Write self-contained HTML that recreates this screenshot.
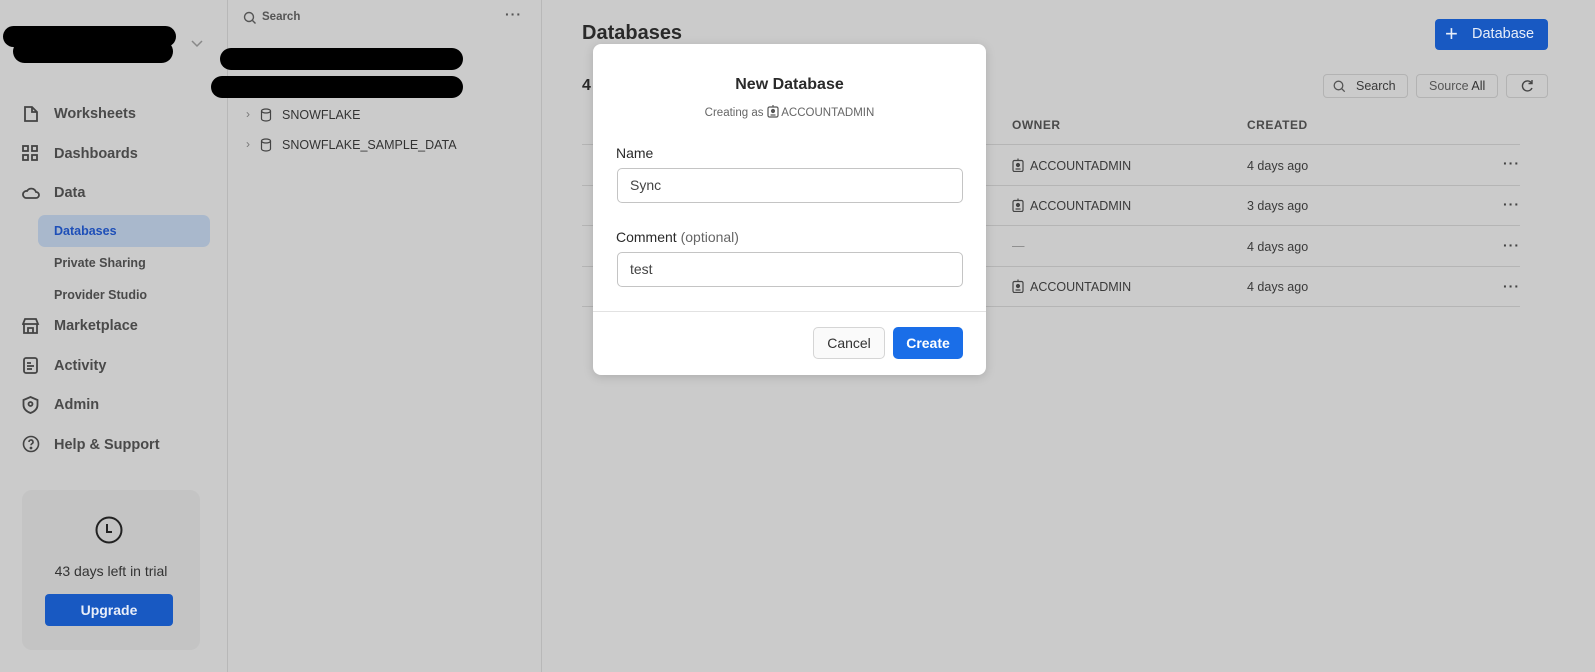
<!DOCTYPE html>
<html><head><meta charset="utf-8"><style>
*{box-sizing:border-box;margin:0;padding:0}
body{width:1595px;height:672px;background:#cbcbcb;font-family:"Liberation Sans",sans-serif;position:relative;overflow:hidden;color:#3a3a3a}
.a{position:absolute}
.blk{position:absolute;background:#000;border-radius:12px}
.nav{position:absolute;left:54px;font-size:14.5px;font-weight:bold;color:#4a4a4a}
.sub{position:absolute;left:54px;font-size:12.5px;font-weight:bold;color:#4a4a4a}
.ic{position:absolute;left:22px}
.row{position:absolute;left:582px;width:938px;border-top:1px solid #b5b5b5}
.cell{position:absolute;font-size:12.5px;color:#3a3a3a}
.cell svg{vertical-align:-2px;margin-right:6px}
.dots{position:absolute;left:1503px;font-size:14px;letter-spacing:1px;font-weight:bold;color:#444}
.btn{position:absolute;border:1px solid #b3b3b3;border-radius:4px;font-size:12.5px;color:#3a3a3a;height:24px;line-height:22px}
</style></head><body>
<div class="a" style="left:227px;top:0;width:1px;height:672px;background:#b8b8b8"></div>
<div class="a" style="left:541px;top:0;width:1px;height:672px;background:#b8b8b8"></div>
<div class="blk" style="left:3px;top:26px;width:173px;height:21px"></div>
<div class="blk" style="left:13px;top:40px;width:160px;height:23px"></div>
<svg class="a" style="left:190px;top:39px" width="14" height="10"><path d="M2 2l5 5 5-5" stroke="#888" stroke-width="1.5" fill="none"/></svg>

<svg class="ic" style="top:105px" width="18" height="18" fill="none" stroke="#444" stroke-width="1.8"><path d="M3 2h7l5 5v9H3z M10 2v5h5"/></svg>
<div class="nav" style="top:106px">Worksheets</div>
<svg class="ic" style="top:145px" width="18" height="18" fill="none" stroke="#444" stroke-width="1.8"><rect x="1" y="1" width="5" height="5"/><rect x="10" y="1" width="5" height="5"/><rect x="1" y="10" width="5" height="5"/><rect x="10" y="10" width="5" height="5"/></svg>
<div class="nav" style="top:146px">Dashboards</div>
<svg class="ic" style="top:186px" width="18" height="14" fill="none" stroke="#444" stroke-width="1.8"><path d="M4 12h10a3 3 0 0 0 0-6 5 5 0 0 0-9-1 3.5 3.5 0 0 0-1 7z"/></svg>
<div class="nav" style="top:185px">Data</div>
<div class="a" style="left:38px;top:215px;width:172px;height:32px;background:#a9b8cc;border-radius:7px"></div>
<div class="sub" style="top:224px;color:#1e4fb8">Databases</div>
<div class="sub" style="top:256px">Private Sharing</div>
<div class="sub" style="top:288px">Provider Studio</div>
<svg class="ic" style="top:317px" width="18" height="18" fill="none" stroke="#444" stroke-width="1.8"><path d="M3 2h11l2 5H1z M2 7v9h13V7 M6 16v-5h5v5"/></svg>
<div class="nav" style="top:318px">Marketplace</div>
<svg class="ic" style="top:357px" width="18" height="18" fill="none" stroke="#444" stroke-width="1.8"><rect x="2" y="1" width="13" height="15" rx="2"/><path d="M5 6h4M5 9h7M5 12h5"/></svg>
<div class="nav" style="top:358px">Activity</div>
<svg class="ic" style="top:396px" width="18" height="18" fill="none" stroke="#444" stroke-width="1.8"><path d="M8.5 1l7 3v5c0 4-3 6.5-7 8-4-1.5-7-4-7-8V4z"/><circle cx="8.5" cy="8" r="2"/></svg>
<div class="nav" style="top:397px">Admin</div>
<svg class="ic" style="top:435px" width="18" height="18" fill="none" stroke="#444" stroke-width="1.6"><circle cx="9" cy="9" r="7.5"/><path d="M7 7a2 2 0 1 1 3 1.7c-.7.4-1 .8-1 1.6"/><circle cx="9" cy="13" r=".6" fill="#444"/></svg>
<div class="nav" style="top:437px">Help &amp; Support</div>

<div class="a" style="left:22px;top:490px;width:178px;height:160px;background:#c4c4c4;border-radius:10px"></div>
<svg class="a" style="left:95px;top:516px" width="28" height="28" fill="none" stroke="#222" stroke-width="2"><circle cx="14" cy="14" r="12.5"/><path d="M12 8v8h5"/></svg>
<div class="a" style="left:22px;top:563px;width:178px;text-align:center;font-size:14px;color:#333">43 days left in trial</div>
<div class="a" style="left:45px;top:594px;width:128px;height:32px;background:#1859c2;border-radius:4px;color:#e8eef9;font-weight:bold;font-size:14px;text-align:center;line-height:32px">Upgrade</div>

<svg class="a" style="left:243px;top:11px" width="14" height="14" fill="none" stroke="#555" stroke-width="1.4"><circle cx="6" cy="6" r="4.5"/><path d="M9.5 9.5l3 3"/></svg>
<div class="a" style="left:262px;top:11px;font-size:11.5px;font-weight:bold;color:#555">Search</div>
<div class="a" style="left:505px;top:6px;font-size:14px;font-weight:bold;color:#555;letter-spacing:1px">···</div>
<div class="blk" style="left:220px;top:48px;width:243px;height:22px"></div>
<div class="blk" style="left:211px;top:76px;width:252px;height:22px"></div>
<div class="a" style="left:246px;top:107px;font-size:12px;color:#777">›</div>
<svg class="a" style="left:260px;top:108px" width="12" height="14" fill="none" stroke="#444" stroke-width="1.2"><ellipse cx="6" cy="3" rx="4.5" ry="2"/><path d="M1.5 3v8c0 1 2 2 4.5 2s4.5-1 4.5-2V3"/></svg>
<div class="a" style="left:282px;top:108px;font-size:12.5px;color:#333">SNOWFLAKE</div>
<div class="a" style="left:246px;top:137px;font-size:12px;color:#777">›</div>
<svg class="a" style="left:260px;top:138px" width="12" height="14" fill="none" stroke="#444" stroke-width="1.2"><ellipse cx="6" cy="3" rx="4.5" ry="2"/><path d="M1.5 3v8c0 1 2 2 4.5 2s4.5-1 4.5-2V3"/></svg>
<div class="a" style="left:282px;top:138px;font-size:12.5px;color:#333">SNOWFLAKE_SAMPLE_DATA</div>

<div class="a" style="left:582px;top:22px;font-size:20px;font-weight:bold;color:#2a2a2a">Databases</div>
<div class="a" style="left:582px;top:77px;font-size:16px;font-weight:bold;color:#2a2a2a">4</div>
<div class="a" style="left:1435px;top:19px;width:113px;height:31px;background:#1859c2;border-radius:4px;color:#e8eef9;font-size:14.5px;line-height:31px"><span style="position:absolute;left:10px;top:-1px;font-size:22px">+</span><span style="position:absolute;left:37px">Database</span></div>
<div class="btn" style="left:1323px;top:74px;width:85px"><svg class="a" style="left:9px;top:5px" width="13" height="13" fill="none" stroke="#555" stroke-width="1.3"><circle cx="5.5" cy="5.5" r="4.3"/><path d="M8.7 8.7l3 3"/></svg><span style="position:absolute;left:32px">Search</span></div>
<div class="btn" style="left:1416px;top:74px;width:82px;padding-left:12px;color:#555">Source <b style="color:#333;font-weight:normal">All</b></div>
<div class="btn" style="left:1506px;top:74px;width:42px"><svg class="a" style="left:13px;top:4px" width="14" height="14" fill="none" stroke="#444" stroke-width="1.4"><path d="M11.5 4A5 5 0 1 0 12 9 M12 1v3.5H8.5"/></svg></div>
<div class="cell" style="left:1012px;top:118px;font-weight:bold;color:#4a4a4a;letter-spacing:.5px;font-size:12px">OWNER</div>
<div class="cell" style="left:1247px;top:118px;font-weight:bold;color:#4a4a4a;letter-spacing:.5px;font-size:12px">CREATED</div>
<div class="row" style="top:144px"></div><div class="row" style="top:185px"></div><div class="row" style="top:225px"></div><div class="row" style="top:266px"></div><div class="row" style="top:306px"></div>

<div class="cell" style="left:1012px;top:158px"><svg width="12" height="14" fill="none" stroke="#444" stroke-width="1.2"><rect x="1" y="2.5" width="10" height="11" rx="1.5"/><circle cx="6" cy="7" r="1.5" fill="#444"/><path d="M3.5 11h5M6 0.5v2"/></svg>ACCOUNTADMIN</div><div class="cell" style="left:1247px;top:159px">4 days ago</div><div class="dots" style="top:155px">···</div>
<div class="cell" style="left:1012px;top:198px"><svg width="12" height="14" fill="none" stroke="#444" stroke-width="1.2"><rect x="1" y="2.5" width="10" height="11" rx="1.5"/><circle cx="6" cy="7" r="1.5" fill="#444"/><path d="M3.5 11h5M6 0.5v2"/></svg>ACCOUNTADMIN</div><div class="cell" style="left:1247px;top:199px">3 days ago</div><div class="dots" style="top:196px">···</div>
<div class="cell" style="left:1012px;top:239px;color:#888">—</div><div class="cell" style="left:1247px;top:240px">4 days ago</div><div class="dots" style="top:237px">···</div>
<div class="cell" style="left:1012px;top:279px"><svg width="12" height="14" fill="none" stroke="#444" stroke-width="1.2"><rect x="1" y="2.5" width="10" height="11" rx="1.5"/><circle cx="6" cy="7" r="1.5" fill="#444"/><path d="M3.5 11h5M6 0.5v2"/></svg>ACCOUNTADMIN</div><div class="cell" style="left:1247px;top:280px">4 days ago</div><div class="dots" style="top:278px">···</div>

<div class="a" style="left:593px;top:44px;width:393px;height:331px;background:#fff;border-radius:8px;box-shadow:0 2px 10px rgba(0,0,0,.15)">
 <div class="a" style="left:0;top:32px;width:393px;text-align:center;font-size:16px;font-weight:bold;color:#2a2a2a">New Database</div>
 <div class="a" style="left:0;top:61px;width:393px;text-align:center;font-size:11.5px;color:#666">Creating as <svg width="12" height="13" style="vertical-align:-2px" fill="none" stroke="#555" stroke-width="1.2"><rect x="1" y="2" width="10" height="10" rx="1.5"/><circle cx="6" cy="6" r="1.5" fill="#555"/><path d="M3.5 10h5"/><path d="M6 0v2"/></svg> ACCOUNTADMIN</div>
 <div class="a" style="left:23px;top:101px;font-size:14px;color:#2a2a2a">Name</div>
 <div class="a" style="left:24px;top:124px;width:346px;height:35px;border:1px solid #c4c4c4;border-radius:5px;padding-left:12px;line-height:33px;font-size:14px;color:#444">Sync</div>
 <div class="a" style="left:23px;top:185px;font-size:14px;color:#2a2a2a">Comment <span style="color:#666">(optional)</span></div>
 <div class="a" style="left:24px;top:208px;width:346px;height:35px;border:1px solid #c4c4c4;border-radius:5px;padding-left:12px;line-height:33px;font-size:14px;color:#444">test</div>
 <div class="a" style="left:0;top:267px;width:393px;height:1px;background:#e2e2e2"></div>
 <div class="a" style="left:220px;top:283px;width:72px;height:32px;border:1px solid #d5d5d5;border-radius:5px;background:#fafafa;text-align:center;line-height:30px;font-size:14px;color:#333">Cancel</div>
 <div class="a" style="left:300px;top:283px;width:70px;height:32px;border-radius:5px;background:#1a6ee8;text-align:center;line-height:32px;font-size:14px;color:#fff;font-weight:bold">Create</div>
</div>
</body></html>
